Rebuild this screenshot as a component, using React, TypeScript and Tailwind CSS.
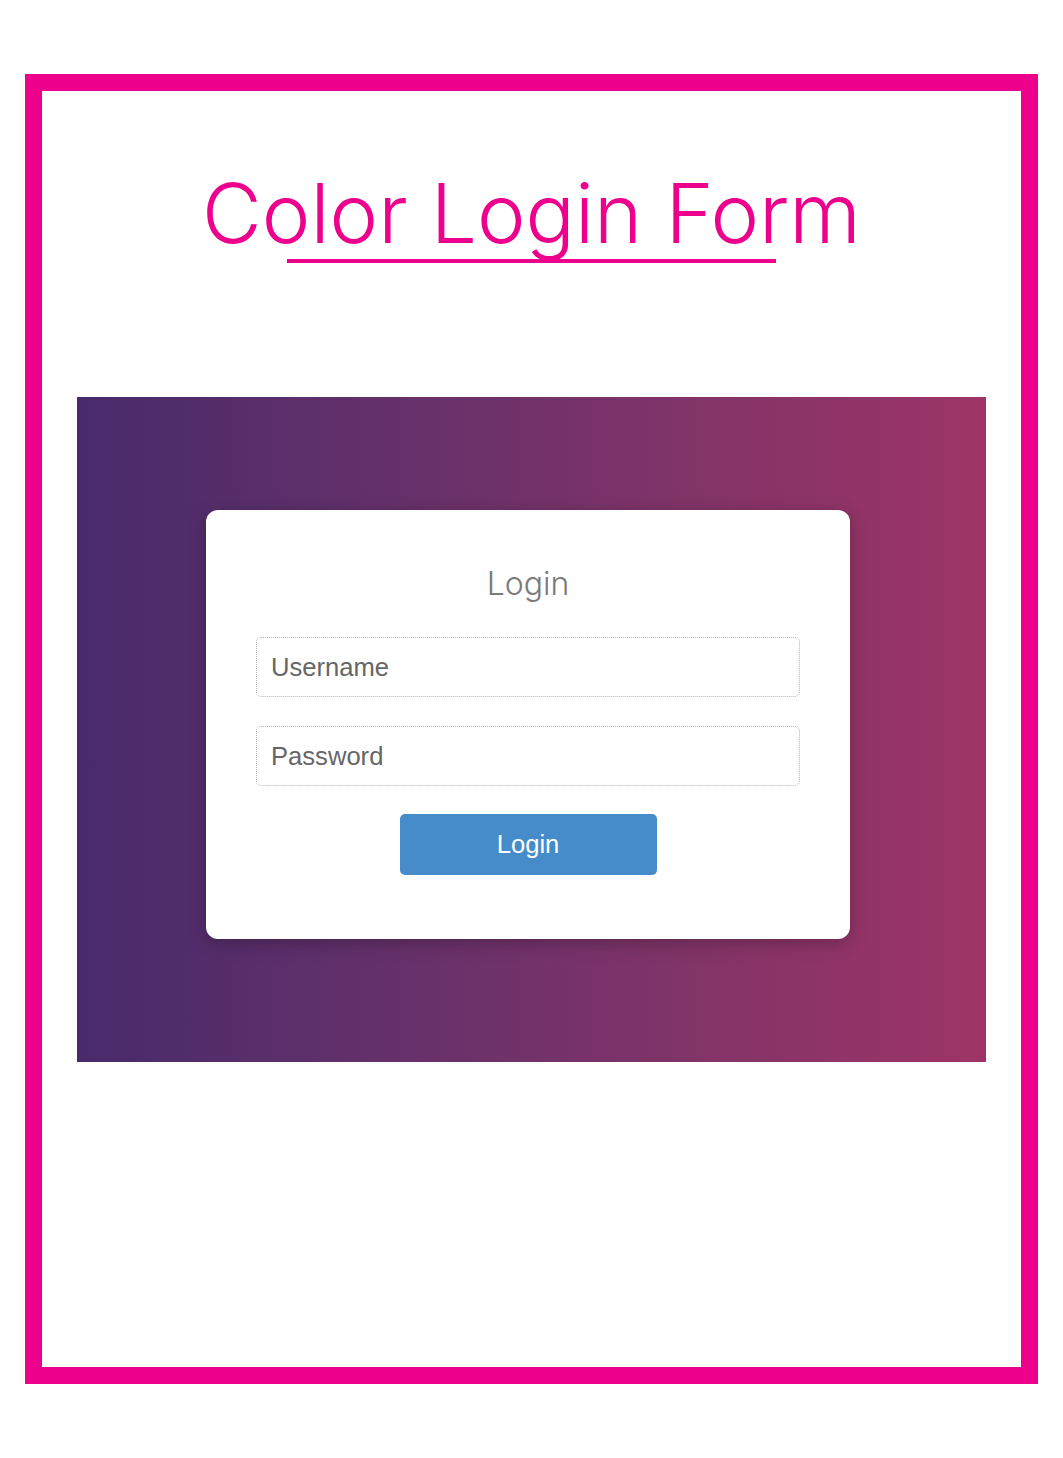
import React from 'react';

const App = () => {
  return (
    <div className="w-[1063px] h-[1458px] bg-white pt-[74px]">
      <div className="mx-[25px] h-[1310px] border-[17px] border-[#ec008c] flex flex-col items-center">
        {/* Title */}
        <div className="mt-[73px] flex flex-col items-center">
          <h1 className="text-[#ec008c] text-[82px] leading-[100px] font-light font-['Inter',sans-serif]">
            Color Login Form
          </h1>
          <div className="w-[489px] h-[4px] bg-[#ec008c] mt-[-5px]" />
        </div>

        {/* Gradient panel */}
        <div className="mt-[134px] w-[909px] h-[665px] bg-gradient-to-r from-[#482a6b] to-[#9e3466] pl-[129px] pt-[113px]">
          <div className="w-[644px] h-[429px] bg-white rounded-[12px] shadow-[0_4px_18px_rgba(0,0,0,0.25)] flex flex-col items-center px-[50px]">
            <h2 className="mt-[51px] text-[#7a7a7a] text-[32px] leading-[46px] font-light font-['Inter',sans-serif]">
              Login
            </h2>
            <input
              type="text"
              placeholder="Username"
              className="mt-[30px] w-full h-[60px] rounded-[5px] border border-dotted border-[#b5b5b5] px-[14px] text-[25.6px] text-[#666] placeholder:text-[#666] font-['Liberation_Sans',Arial,sans-serif] outline-none"
            />
            <input
              type="password"
              placeholder="Password"
              className="mt-[29px] w-full h-[60px] rounded-[5px] border border-dotted border-[#b5b5b5] px-[14px] text-[25.6px] text-[#666] placeholder:text-[#666] font-['Liberation_Sans',Arial,sans-serif] outline-none"
            />
            <button className="mt-[28px] w-[257px] h-[61px] rounded-[5px] bg-[#468bca] text-white text-[25.6px] font-['Liberation_Sans',Arial,sans-serif]">
              Login
            </button>
          </div>
        </div>
      </div>
    </div>
  );
};

export default App;
